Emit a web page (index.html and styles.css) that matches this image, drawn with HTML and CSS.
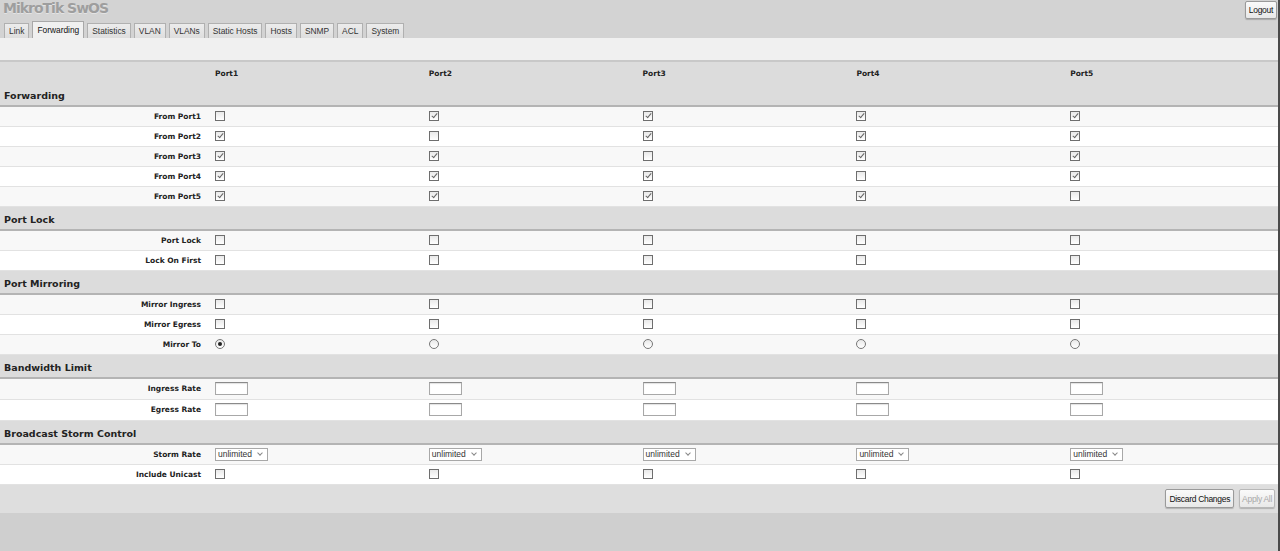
FILE: index.html
```html
<!DOCTYPE html>
<html lang="en">
<head>
    <meta charset="UTF-8">
    <title>MikroTik SwOS</title>
    <link rel="stylesheet" href="styles.css">
</head>
<body>
<div class="page">

<div class="header">
    <div class="title-bar">
        <div class="logo">MikroTik SwOS</div>
        <button class="btn logout">Logout</button>
    </div>
    <ul class="tabs">
        <li>Link</li>
        <li class="active">Forwarding</li>
        <li>Statistics</li>
        <li>VLAN</li>
        <li>VLANs</li>
        <li>Static Hosts</li>
        <li>Hosts</li>
        <li>SNMP</li>
        <li>ACL</li>
        <li>System</li>
    </ul>
</div>

<div class="toolbar"></div>

<table class="grid">
    <colgroup>
        <col class="label-col">
        <col><col><col><col><col>
    </colgroup>
    <thead>
        <tr class="ports">
            <th></th>
            <th>Port1</th><th>Port2</th><th>Port3</th><th>Port4</th><th>Port5</th>
        </tr>
    </thead>
    <tbody>
        <!-- Forwarding -->
        <tr class="section"><td colspan="6">Forwarding</td></tr>
        <tr class="odd">
            <th>From Port1</th>
            <td><input type="checkbox"></td>
            <td><input type="checkbox" checked></td>
            <td><input type="checkbox" checked></td>
            <td><input type="checkbox" checked></td>
            <td><input type="checkbox" checked></td>
        </tr>
        <tr>
            <th>From Port2</th>
            <td><input type="checkbox" checked></td>
            <td><input type="checkbox"></td>
            <td><input type="checkbox" checked></td>
            <td><input type="checkbox" checked></td>
            <td><input type="checkbox" checked></td>
        </tr>
        <tr class="odd">
            <th>From Port3</th>
            <td><input type="checkbox" checked></td>
            <td><input type="checkbox" checked></td>
            <td><input type="checkbox"></td>
            <td><input type="checkbox" checked></td>
            <td><input type="checkbox" checked></td>
        </tr>
        <tr>
            <th>From Port4</th>
            <td><input type="checkbox" checked></td>
            <td><input type="checkbox" checked></td>
            <td><input type="checkbox" checked></td>
            <td><input type="checkbox"></td>
            <td><input type="checkbox" checked></td>
        </tr>
        <tr class="odd">
            <th>From Port5</th>
            <td><input type="checkbox" checked></td>
            <td><input type="checkbox" checked></td>
            <td><input type="checkbox" checked></td>
            <td><input type="checkbox" checked></td>
            <td><input type="checkbox"></td>
        </tr>

        <!-- Port Lock -->
        <tr class="section"><td colspan="6">Port Lock</td></tr>
        <tr class="odd">
            <th>Port Lock</th>
            <td><input type="checkbox"></td>
            <td><input type="checkbox"></td>
            <td><input type="checkbox"></td>
            <td><input type="checkbox"></td>
            <td><input type="checkbox"></td>
        </tr>
        <tr>
            <th>Lock On First</th>
            <td><input type="checkbox"></td>
            <td><input type="checkbox"></td>
            <td><input type="checkbox"></td>
            <td><input type="checkbox"></td>
            <td><input type="checkbox"></td>
        </tr>

        <!-- Port Mirroring -->
        <tr class="section"><td colspan="6">Port Mirroring</td></tr>
        <tr class="odd">
            <th>Mirror Ingress</th>
            <td><input type="checkbox"></td>
            <td><input type="checkbox"></td>
            <td><input type="checkbox"></td>
            <td><input type="checkbox"></td>
            <td><input type="checkbox"></td>
        </tr>
        <tr>
            <th>Mirror Egress</th>
            <td><input type="checkbox"></td>
            <td><input type="checkbox"></td>
            <td><input type="checkbox"></td>
            <td><input type="checkbox"></td>
            <td><input type="checkbox"></td>
        </tr>
        <tr class="odd">
            <th>Mirror To</th>
            <td><input type="radio" name="mirror" checked></td>
            <td><input type="radio" name="mirror"></td>
            <td><input type="radio" name="mirror"></td>
            <td><input type="radio" name="mirror"></td>
            <td><input type="radio" name="mirror"></td>
        </tr>

        <!-- Bandwidth Limit -->
        <tr class="section"><td colspan="6">Bandwidth Limit</td></tr>
        <tr class="odd tall">
            <th>Ingress Rate</th>
            <td><input type="text" class="rate"></td>
            <td><input type="text" class="rate"></td>
            <td><input type="text" class="rate"></td>
            <td><input type="text" class="rate"></td>
            <td><input type="text" class="rate"></td>
        </tr>
        <tr class="tall">
            <th>Egress Rate</th>
            <td><input type="text" class="rate"></td>
            <td><input type="text" class="rate"></td>
            <td><input type="text" class="rate"></td>
            <td><input type="text" class="rate"></td>
            <td><input type="text" class="rate"></td>
        </tr>

        <!-- Broadcast Storm Control -->
        <tr class="section"><td colspan="6">Broadcast Storm Control</td></tr>
        <tr class="odd">
            <th>Storm Rate</th>
            <td><span class="select">unlimited<span class="caret"></span></span></td>
            <td><span class="select">unlimited<span class="caret"></span></span></td>
            <td><span class="select">unlimited<span class="caret"></span></span></td>
            <td><span class="select">unlimited<span class="caret"></span></span></td>
            <td><span class="select">unlimited<span class="caret"></span></span></td>
        </tr>
        <tr>
            <th>Include Unicast</th>
            <td><input type="checkbox"></td>
            <td><input type="checkbox"></td>
            <td><input type="checkbox"></td>
            <td><input type="checkbox"></td>
            <td><input type="checkbox"></td>
        </tr>
    </tbody>
</table>

<div class="footer">
    <button class="btn">Discard Changes</button>
    <button class="btn" disabled>Apply All</button>
</div>

</div>
</body>
</html>
```

FILE: styles.css
```css
html, body {
    margin: 0;
    padding: 0;
    height: 100%;
}
body {
    font-family: "DejaVu Sans", Verdana, sans-serif;
    font-size: 8px;
    color: #222;
    background-color: #cfcfcf;
}
.page {
    min-height: 100%;
    border-right: 2px solid #4a4a4a;
    box-sizing: border-box;
}
.header {
    background-color: #d3d3d3;
    height: 38px;
    display: flex;
    flex-direction: column;
    justify-content: space-between;
}
.title-bar {
    display: flex;
    justify-content: space-between;
    align-items: flex-start;
}
.logo {
    font-family: "DejaVu Sans", Verdana, sans-serif;
    font-weight: bold;
    font-size: 14px;
    color: #9e9e9e;
    text-shadow: 0 1px 0 #e4e4e4;
    padding: 0 0 0 3px;
    letter-spacing: -1px;
    line-height: 16px;
}
.btn {
    font-family: "Liberation Sans", Arial, sans-serif;
    font-size: 8.5px;
    color: #111;
    background: linear-gradient(#fafafa, #e8e8e8);
    border: 1px solid #9a9a9a;
    border-radius: 2px;
    box-shadow: 0 1px 1px rgba(0, 0, 0, 0.2);
    padding: 0 3px;
    height: 19px;
    letter-spacing: -0.3px;
}
.btn:disabled {
    color: #a8a8a8;
    border-color: #b8b8b8;
    padding: 0 2px;
}
.logout {
    margin: 1px 1px 0 0;
    height: 18px;
}
.tabs {
    list-style: none;
    margin: 0;
    padding: 0 0 0 4px;
    display: flex;
    align-items: flex-end;
    gap: 3px;
}
.tabs li {
    font-family: "Liberation Sans", Arial, sans-serif;
    font-size: 8.4px;
    color: #333;
    background: linear-gradient(#ececec, #dedede);
    border: 1px solid #b0b0b0;
    border-bottom: none;
    height: 14px;
    line-height: 14px;
    padding: 0 4px;
}
.tabs li.active {
    background: #f0f0f0;
    height: 16px;
    line-height: 17px;
    color: #111;
    border-color: #a8a8a8;
}
.toolbar {
    background-color: #f0f0f0;
    height: 22px;
    border-bottom: 2px solid #c8c8c8;
}
.grid {
    width: 100%;
    border-collapse: collapse;
    table-layout: fixed;
    background-color: #fff;
}
.label-col {
    width: 209px;
}
.grid th, .grid td {
    padding: 0;
    text-align: left;
    vertical-align: middle;
}
.grid tbody th {
    text-align: right;
    font-weight: bold;
    padding-right: 8px;
    font-size: 7.5px;
}
.ports th {
    background-color: #dcdcdc;
    height: 20px;
    box-sizing: border-box;
    font-weight: bold;
    font-size: 7.5px;
    padding: 3px 0 0 6px;
}
.grid tbody tr {
    height: 20px;
}
.grid tbody tr td, .grid tbody tr th {
    border-bottom: 1px solid #e2e2e2;
}
.grid tr.odd td, .grid tr.odd th {
    background-color: #f8f8f8;
}
.grid tr.tall {
    height: 21px;
}
.grid td {
    padding-left: 6px;
}
.grid tbody tr.section {
    height: 24px;
}
.grid tbody tr.section td {
    background-color: #dcdcdc;
    font-size: 9.5px;
    font-weight: bold;
    padding: 4px 0 0 4px;
    border-bottom: 2px solid #b4b4b4;
    color: #222;
}

input[type="checkbox"], input[type="radio"] {
    appearance: none;
    -webkit-appearance: none;
    margin: 0;
    width: 10px;
    height: 10px;
    border: 1px solid #6e6e6e;
    background: linear-gradient(#e9e9e9, #fff);
    box-sizing: border-box;
    vertical-align: middle;
    position: relative;
    display: inline-block;
}
input[type="checkbox"]:checked::after {
    content: "";
    position: absolute;
    left: 3px;
    top: 0px;
    width: 2px;
    height: 5px;
    border: solid #666;
    border-width: 0 1px 1px 0;
    transform: rotate(40deg);
}
input[type="radio"] {
    border-radius: 50%;
    border-color: #777;
}
input[type="radio"]:checked::after {
    content: "";
    position: absolute;
    left: 2px;
    top: 2px;
    width: 4px;
    height: 4px;
    border-radius: 50%;
    background-color: #222;
}
input.rate {
    width: 33px;
    height: 13px;
    box-sizing: border-box;
    border: 1px solid #a8a8a8;
    border-top-color: #8a8a8a;
    box-shadow: inset 0 1px 1px rgba(0, 0, 0, 0.12);
    margin: 0;
    padding: 0;
    vertical-align: middle;
    background: #fff;
}
.select {
    display: inline-flex;
    align-items: center;
    box-sizing: border-box;
    width: 53px;
    height: 13px;
    border: 1px solid #a8a8a8;
    background: #fff;
    font-family: "Liberation Sans", Arial, sans-serif;
    font-size: 8.5px;
    color: #333;
    padding-left: 2px;
    vertical-align: middle;
}
.caret {
    width: 3px;
    height: 3px;
    border: solid #888;
    border-width: 0 1px 1px 0;
    transform: rotate(45deg);
    margin: -3px 0 0 6px;
}
.footer {
    background-color: #dedede;
    height: 28px;
    display: flex;
    justify-content: flex-end;
    align-items: center;
    gap: 5px;
    padding-right: 3px;
}
```
